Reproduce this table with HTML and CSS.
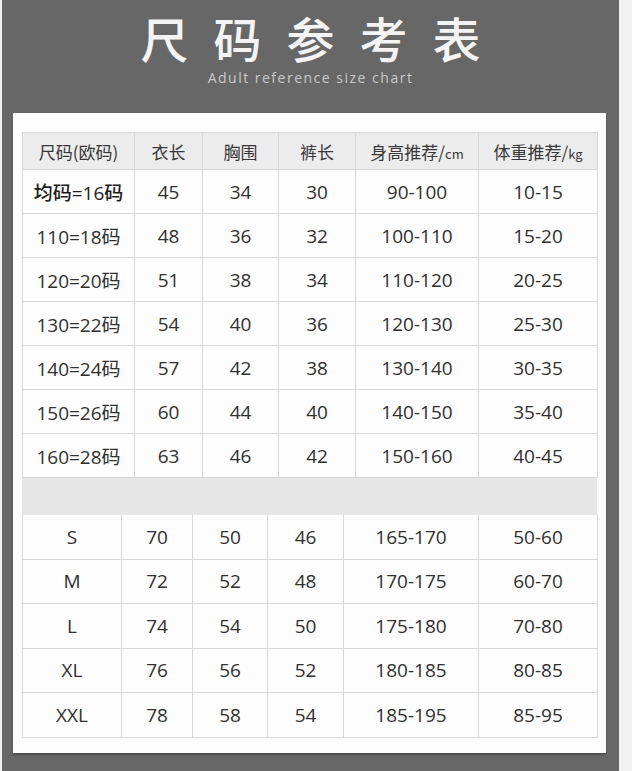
FILE: index.html
```html
<!DOCTYPE html>
<html lang="zh">
<head>
<meta charset="utf-8">
<title>尺码参考表</title>
<link rel="stylesheet" href="styles.css">
</head>
<body>
<div class="page">
  <header class="head">
    <h1 class="title"><span>尺</span><span>码</span><span>参</span><span>考</span><span>表</span></h1>
    <p class="subtitle">Adult reference size chart</p>
  </header>
  <section class="card">
    <table class="chart chart-top">
      <colgroup>
        <col class="a1"><col class="a2"><col class="a3"><col class="a4"><col class="a5"><col class="a6">
      </colgroup>
      <thead>
        <tr>
          <th>尺码(欧码)</th><th>衣长</th><th>胸围</th><th>裤长</th>
          <th>身高推荐/<small>cm</small></th><th>体重推荐/<small>kg</small></th>
        </tr>
      </thead>
      <tbody>
        <tr><td class="strong">均码=16码</td><td>45</td><td>34</td><td>30</td><td>90-100</td><td>10-15</td></tr>
        <tr><td>110=18码</td><td>48</td><td>36</td><td>32</td><td>100-110</td><td>15-20</td></tr>
        <tr><td>120=20码</td><td>51</td><td>38</td><td>34</td><td>110-120</td><td>20-25</td></tr>
        <tr><td>130=22码</td><td>54</td><td>40</td><td>36</td><td>120-130</td><td>25-30</td></tr>
        <tr><td>140=24码</td><td>57</td><td>42</td><td>38</td><td>130-140</td><td>30-35</td></tr>
        <tr><td>150=26码</td><td>60</td><td>44</td><td>40</td><td>140-150</td><td>35-40</td></tr>
        <tr><td>160=28码</td><td>63</td><td>46</td><td>42</td><td>150-160</td><td>40-45</td></tr>
      </tbody>
    </table>
    <div class="band"></div>
    <table class="chart chart-bottom">
      <colgroup>
        <col class="b1"><col class="b2"><col class="b3"><col class="b4"><col class="b5"><col class="b6">
      </colgroup>
      <tbody>
        <tr><td>S</td><td>70</td><td>50</td><td>46</td><td>165-170</td><td>50-60</td></tr>
        <tr><td>M</td><td>72</td><td>52</td><td>48</td><td>170-175</td><td>60-70</td></tr>
        <tr><td>L</td><td>74</td><td>54</td><td>50</td><td>175-180</td><td>70-80</td></tr>
        <tr><td>XL</td><td>76</td><td>56</td><td>52</td><td>180-185</td><td>80-85</td></tr>
        <tr><td>XXL</td><td>78</td><td>58</td><td>54</td><td>185-195</td><td>85-95</td></tr>
      </tbody>
    </table>
  </section>
</div>
</body>
</html>
```
FILE: styles.css
```css
html, body {
  margin: 0;
  padding: 0;
}
body {
  background: #f1f1f1;
  width: 632px;
  height: 771px;
  overflow: hidden;
  font-family: "Open Sans", "Noto Sans CJK SC", sans-serif;
}
.page {
  margin-left: 2px;
  width: 617px;
  height: 771px;
  background: #676767;
  box-sizing: border-box;
}
.head {
  height: 113px;
  box-sizing: border-box;
  padding-top: 11px;
  text-align: center;
}
.title {
  margin: 0;
  display: flex;
  justify-content: center;
  gap: 25px;
  font-family: "Noto Sans CJK SC", sans-serif;
  font-weight: 500;
  font-size: 48px;
  line-height: 52px;
  color: #f4f4f4;
}
.subtitle {
  margin: 6px 0 0;
  font-family: "Open Sans", sans-serif;
  font-size: 14px;
  line-height: 18px;
  letter-spacing: 1.5px;
  color: #c9c9c9;
}
.card {
  margin-left: 11px;
  width: 593px;
  height: 640px;
  box-sizing: border-box;
  padding: 19px 9px 16px;
  background: #fdfdfd;
  box-shadow: 0 2px 2px rgba(0, 0, 0, 0.25);
}
.chart {
  width: 575px;
  table-layout: fixed;
  border-collapse: collapse;
  color: #303030;
}
.chart td, .chart th {
  border: 1px solid #d8d8d8;
  padding: 0;
  text-align: center;
  vertical-align: middle;
  font-size: 19px;
  font-weight: 400;
}
.chart th {
  height: 36px;
  background: #ececec;
  font-size: 17px;
  color: #383838;
  font-family: "Noto Sans CJK SC", sans-serif;
}
.chart th small {
  font-size: 13px;
}
.chart-top td {
  height: 43px;
}
.chart-bottom td {
  height: 43.5px;
}
.chart td.strong {
  font-weight: 500;
  color: #1c1c1c;
}
.a1 { width: 112px; }
.a2 { width: 68px; }
.a3 { width: 76px; }
.a4 { width: 77px; }
.a5 { width: 123px; }
.a6 { width: 119px; }
.b1 { width: 99px; }
.b2 { width: 71px; }
.b3 { width: 75px; }
.b4 { width: 76px; }
.b5 { width: 135px; }
.b6 { width: 119px; }
.band {
  width: 575px;
  height: 37px;
  background: #e6e6e6;
}
.chart-bottom tr:first-child td {
  border-top: none;
}
```
